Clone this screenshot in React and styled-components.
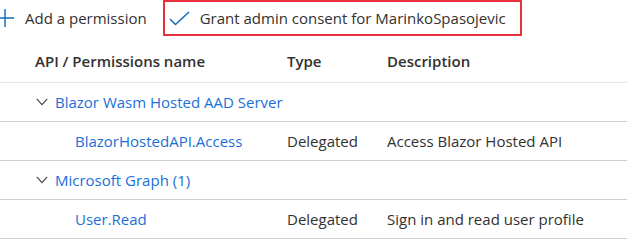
import React from "react";
import styled, { createGlobalStyle } from "styled-components";

const Global = createGlobalStyle`
  html, body { margin: 0; padding: 0; background: #fff; }
  body { font-family: "Segoe UI", "Open Sans", "Noto Sans", sans-serif; color: #323130; }
`;

const Page = styled.div`
  width: 627px;
  height: 244px;
  overflow: hidden;
  background: #fff;
`;

const Toolbar = styled.div`
  display: flex;
  align-items: center;
  height: 36px;
`;

const ToolButton = styled.div`
  display: flex;
  align-items: center;
  box-sizing: border-box;
  height: 36px;
  font-size: 15px;
  color: #323130;
  white-space: nowrap;
  ${(p) =>
    p.$highlight
      ? `border: 2px solid #e8313a; padding: 0 9px 0 4px; margin-left: 16px; width: 359px;`
      : ``}
`;

const IconSlot = styled.span`
  display: inline-flex;
  width: ${(p) => p.$w}px;
  margin-right: ${(p) => p.$gap}px;
`;

const Table = styled.div`
  display: grid;
  grid-template-columns: 287px 100px 1fr;
  margin-top: 6px;
`;

const Row = styled.div`
  display: contents;
`;

const Cell = styled.div`
  display: flex;
  align-items: center;
  box-sizing: border-box;
  height: ${(p) => (p.$header ? 41 : 39)}px;
  padding-bottom: ${(p) => (p.$header ? 2 : 0)}px;
  border-bottom: 1px solid ${(p) => (p.$header ? "#e6e6e6" : "#cfcfcf")};
  padding-left: ${(p) => p.$indent || 0}px;
  font-size: 15px;
  font-weight: ${(p) => (p.$header ? 600 : 400)};
  color: ${(p) => (p.$link ? "#1a6fd8" : "#323130")};
  white-space: nowrap;
`;

const Chevron = styled.svg`
  margin-right: 7px;
  flex: none;
`;

const Plus = () => (
  <svg width="14" height="18" viewBox="0 0 14 18" style={{ overflow: "hidden" }}>
    <path d="M-5 9H14M5 0V18" stroke="#0f6cbd" strokeWidth="1.4" fill="none" />
  </svg>
);

const Check = () => (
  <svg width="21" height="15" viewBox="0 0 21 15">
    <path d="M1 8L6.5 13.5L20 1" stroke="#0f6cbd" strokeWidth="1.5" fill="none" />
  </svg>
);

const Down = () => (
  <Chevron width="12" height="8" viewBox="0 0 12 8">
    <path d="M0.8 0.8L6 6.6L11.2 0.8" stroke="#444" strokeWidth="1.1" fill="none" />
  </Chevron>
);

const groups = [
  {
    name: "Blazor Wasm Hosted AAD Server",
    items: [{ name: "BlazorHostedAPI.Access", type: "Delegated", desc: "Access Blazor Hosted API" }],
  },
  {
    name: "Microsoft Graph (1)",
    items: [{ name: "User.Read", type: "Delegated", desc: "Sign in and read user profile" }],
  },
];

export default function App() {
  return (
    <Page>
      <Global />
      <Toolbar>
        <ToolButton>
          <IconSlot $w={14} $gap={11}>
            <Plus />
          </IconSlot>
          Add a permission
        </ToolButton>
        <ToolButton $highlight>
          <IconSlot $w={21} $gap={10}>
            <Check />
          </IconSlot>
          Grant admin consent for MarinkoSpasojevic
        </ToolButton>
      </Toolbar>
      <Table>
        <Row>
          <Cell $header $indent={35}>API / Permissions name</Cell>
          <Cell $header>Type</Cell>
          <Cell $header>Description</Cell>
        </Row>
        {groups.map((g) => (
          <React.Fragment key={g.name}>
            <Row>
              <Cell $indent={36} $link>
                <Down />
                {g.name}
              </Cell>
              <Cell />
              <Cell />
            </Row>
            {g.items.map((it) => (
              <Row key={it.name}>
                <Cell $indent={75} $link>{it.name}</Cell>
                <Cell>{it.type}</Cell>
                <Cell>{it.desc}</Cell>
              </Row>
            ))}
          </React.Fragment>
        ))}
      </Table>
    </Page>
  );
}
